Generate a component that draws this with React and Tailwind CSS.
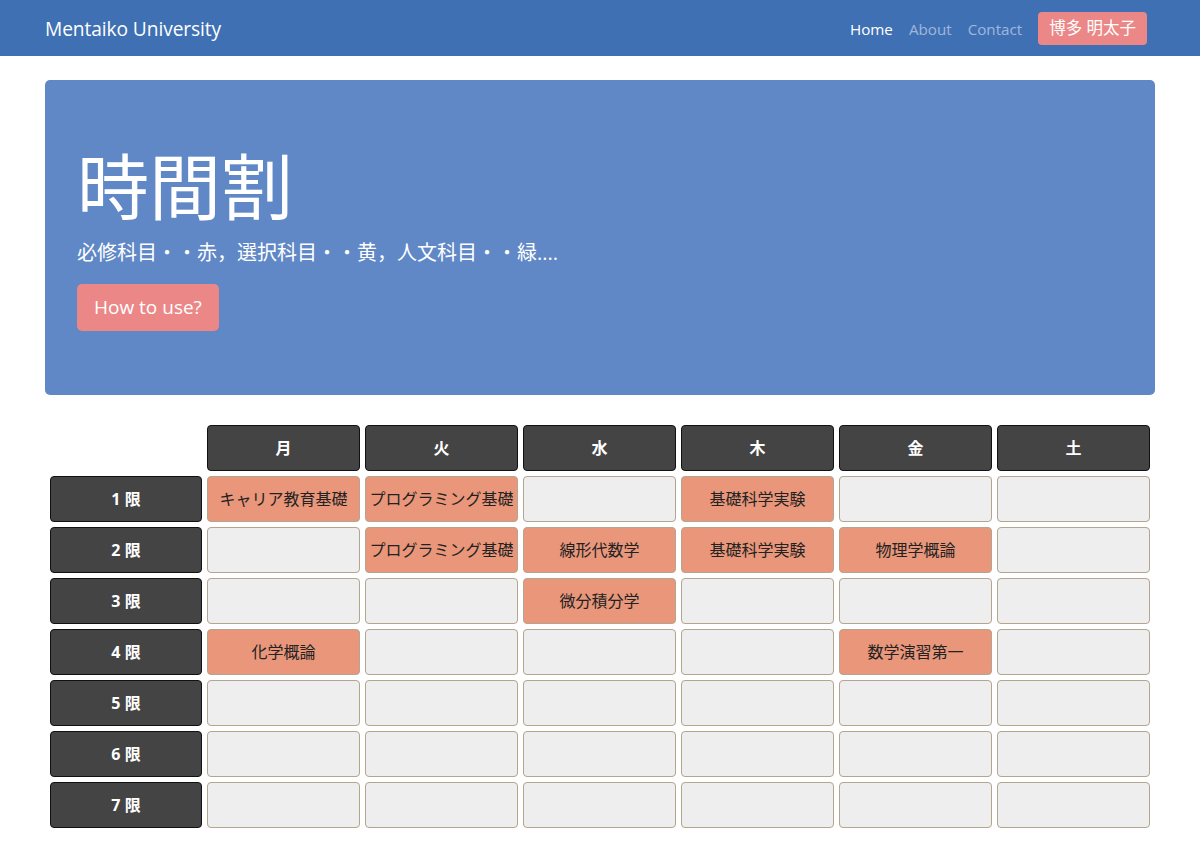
import React from 'react';

const days = ['月', '火', '水', '木', '金', '土'];

// null = empty slot
const timetable = [
  ['キャリア教育基礎', 'プログラミング基礎', null, '基礎科学実験', null, null],
  [null, 'プログラミング基礎', '線形代数学', '基礎科学実験', '物理学概論', null],
  [null, null, '微分積分学', null, null, null],
  ['化学概論', null, null, null, '数学演習第一', null],
  [null, null, null, null, null, null],
  [null, null, null, null, null, null],
  [null, null, null, null, null, null],
];

const font = { fontFamily: '"Open Sans", "Noto Sans CJK JP", sans-serif' };

const Navbar = () => (
  <nav className="h-14 bg-[#3e70b3] flex items-center justify-between pl-[45px] pr-[53px]">
    <span className="text-white text-[19.2px] tracking-[-0.1px] pt-[2px]">Mentaiko University</span>
    <div className="flex items-center">
      <a className="text-white text-[15.2px] mr-4 pt-[2px]">Home</a>
      <a className="text-white/50 text-[15.2px] mr-4 pt-[2px]">About</a>
      <a className="text-white/50 text-[15.2px] mr-4 pt-[2px]">Contact</a>
      <button className="h-[33px] px-[11px] rounded bg-[#eb8787] text-white text-[16.5px]">博多 明太子</button>
    </div>
  </nav>
);

const Jumbotron = () => (
  <div className="mx-[45px] mt-6 rounded-[5px] bg-[#6088c6] pt-16 pb-16 px-8">
    <h1 className="text-white text-[72px] leading-[84px] font-normal">時間割</h1>
    <p className="text-white text-[20px] leading-[33px] mt-2">必修科目・・赤，選択科目・・黄，人文科目・・緑....</p>
    <button className="mt-[15px] h-[47px] px-[17px] rounded-[5px] bg-[#eb8787] text-white text-[19px]">How to use?</button>
  </div>
);

const Timetable = () => (
  <div className="mt-[30px] ml-[50px] grid grid-cols-[152px_repeat(6,153px)] auto-rows-[46px] gap-[5px]">
    <div />
    {days.map((d) => (
      <div key={d} className="flex items-center justify-center rounded border border-[#111] bg-[#444] text-white font-bold text-[16px]">
        {d}
      </div>
    ))}
    {timetable.map((row, i) => (
      <React.Fragment key={i}>
        <div className="flex items-center justify-center rounded border border-[#111] bg-[#444] text-white font-bold text-[16px]">
          {i + 1} 限
        </div>
        {row.map((c, j) => (
          <div
            key={j}
            className={`flex items-center justify-center rounded border border-[#b5a48e] text-[#222] text-[16px] whitespace-nowrap ${c ? 'bg-[#e9967a]' : 'bg-[#eeeeee]'}`}
          >
            {c}
          </div>
        ))}
      </React.Fragment>
    ))}
  </div>
);

export default function App() {
  return (
    <div className="min-h-[856px] bg-white" style={font}>
      <Navbar />
      <Jumbotron />
      <Timetable />
    </div>
  );
}
